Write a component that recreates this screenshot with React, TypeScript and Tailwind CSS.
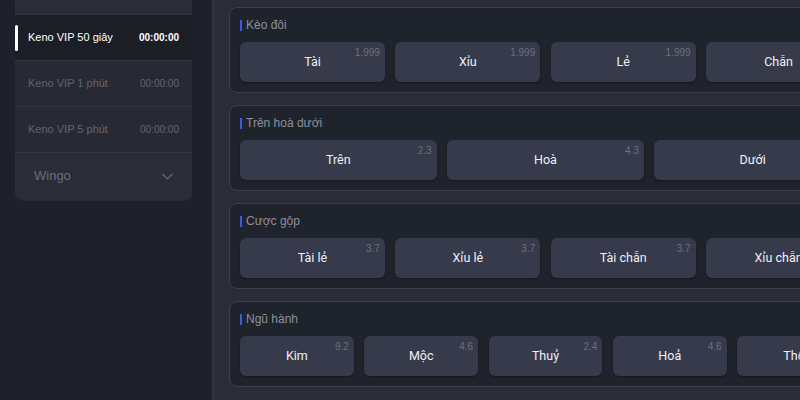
import { ChevronDown } from 'lucide-react'

type Bet = { label: string; odds: string }

const sections: { title: string; cols: string; bets: Bet[] }[] = [
  {
    title: 'Kèo đôi',
    cols: 'grid-cols-4',
    bets: [
      { label: 'Tài', odds: '1.999' },
      { label: 'Xỉu', odds: '1.999' },
      { label: 'Lẻ', odds: '1.999' },
      { label: 'Chẵn', odds: '1.999' },
    ],
  },
  {
    title: 'Trên hoà dưới',
    cols: 'grid-cols-3',
    bets: [
      { label: 'Trên', odds: '2.3' },
      { label: 'Hoà', odds: '4.3' },
      { label: 'Dưới', odds: '2.3' },
    ],
  },
  {
    title: 'Cược gộp',
    cols: 'grid-cols-4',
    bets: [
      { label: 'Tài lẻ', odds: '3.7' },
      { label: 'Xỉu lẻ', odds: '3.7' },
      { label: 'Tài chẵn', odds: '3.7' },
      { label: 'Xỉu chẵn', odds: '3.7' },
    ],
  },
  {
    title: 'Ngũ hành',
    cols: 'grid-cols-5',
    bets: [
      { label: 'Kim', odds: '9.2' },
      { label: 'Mộc', odds: '4.6' },
      { label: 'Thuỷ', odds: '2.4' },
      { label: 'Hoả', odds: '4.6' },
      { label: 'Thổ', odds: '9.2' },
    ],
  },
]

const games = [
  { name: 'Keno VIP 30 giây', active: false },
  { name: 'Keno VIP 50 giây', active: true },
  { name: 'Keno VIP 1 phút', active: false },
  { name: 'Keno VIP 5 phút', active: false },
]

export default function App() {
  return (
    <div
      className="flex h-[400px] w-[800px] overflow-hidden bg-[#1e2129]"
      style={{ fontFamily: '"Liberation Sans", Arial, sans-serif' }}
    >
      {/* sidebar */}
      <div className="ml-[15px] mt-[-31px] flex h-[232px] w-[177px] shrink-0 flex-col overflow-hidden rounded-b-lg bg-[#272a34]">
        {games.map((g, i) => (
          <div
            key={g.name}
            className={`relative flex h-[46px] shrink-0 items-center justify-between border-b border-[#343744] pl-[13px] pr-[13px] ${
              g.active ? 'bg-[#1c1e26]' : i === 0 ? 'bg-[#2a2d38]' : ''
            }`}
          >
            {g.active && <span className="absolute left-0 top-[10px] h-[26px] w-[3px] rounded-sm bg-white" />}
            <span className={`text-[11px] ${g.active ? 'text-white' : 'text-[#62656f]'}`}>{g.name}</span>
            <span className={`text-[10px] ${g.active ? 'font-semibold text-white' : 'text-[#62656f]'}`}>00:00:00</span>
          </div>
        ))}
        <div className="flex h-[46px] items-center justify-between bg-[#2a2d38] pl-[19px] pr-[15px]">
          <span className="text-[13px] text-[#6b6e79]">Wingo</span>
          <ChevronDown className="h-[19px] w-[19px] text-[#6b6e79]" strokeWidth={1.4} />
        </div>
      </div>

      {/* main panel */}
      <div className="ml-[20px] flex flex-1 flex-col gap-[12px] border-l-[3px] border-[#2f3240] bg-[#2a2d38] pl-[14px] pt-[7px]">
        {sections.map((s) => (
          <div
            key={s.title}
            className="w-[633px] shrink-0 rounded-lg border border-[#3b3f4c] bg-[#1f232b] px-[10px] pb-[10px] pt-[10px]"
          >
            <div className="mb-[10px] flex h-[14px] items-center gap-[4px]">
              <span className="h-[11px] w-[2px] bg-[#3d5bd8]" />
              <span className="text-[12px] text-[#8e919c]">{s.title}</span>
            </div>
            <div className={`grid ${s.cols} gap-[10.5px]`}>
              {s.bets.map((b) => (
                <div
                  key={b.label}
                  className="relative flex h-[40px] items-center justify-center rounded-md bg-[#363a4b] shadow-[0_1px_2px_rgba(0,0,0,0.35)]"
                >
                  <span className="font-['Roboto',sans-serif] text-[12.5px] text-[#f0f0f3]">{b.label}</span>
                  <span className="absolute right-[5px] top-[3px] text-[10px] text-[#6c707e]">{b.odds}</span>
                </div>
              ))}
            </div>
          </div>
        ))}
      </div>
    </div>
  )
}
